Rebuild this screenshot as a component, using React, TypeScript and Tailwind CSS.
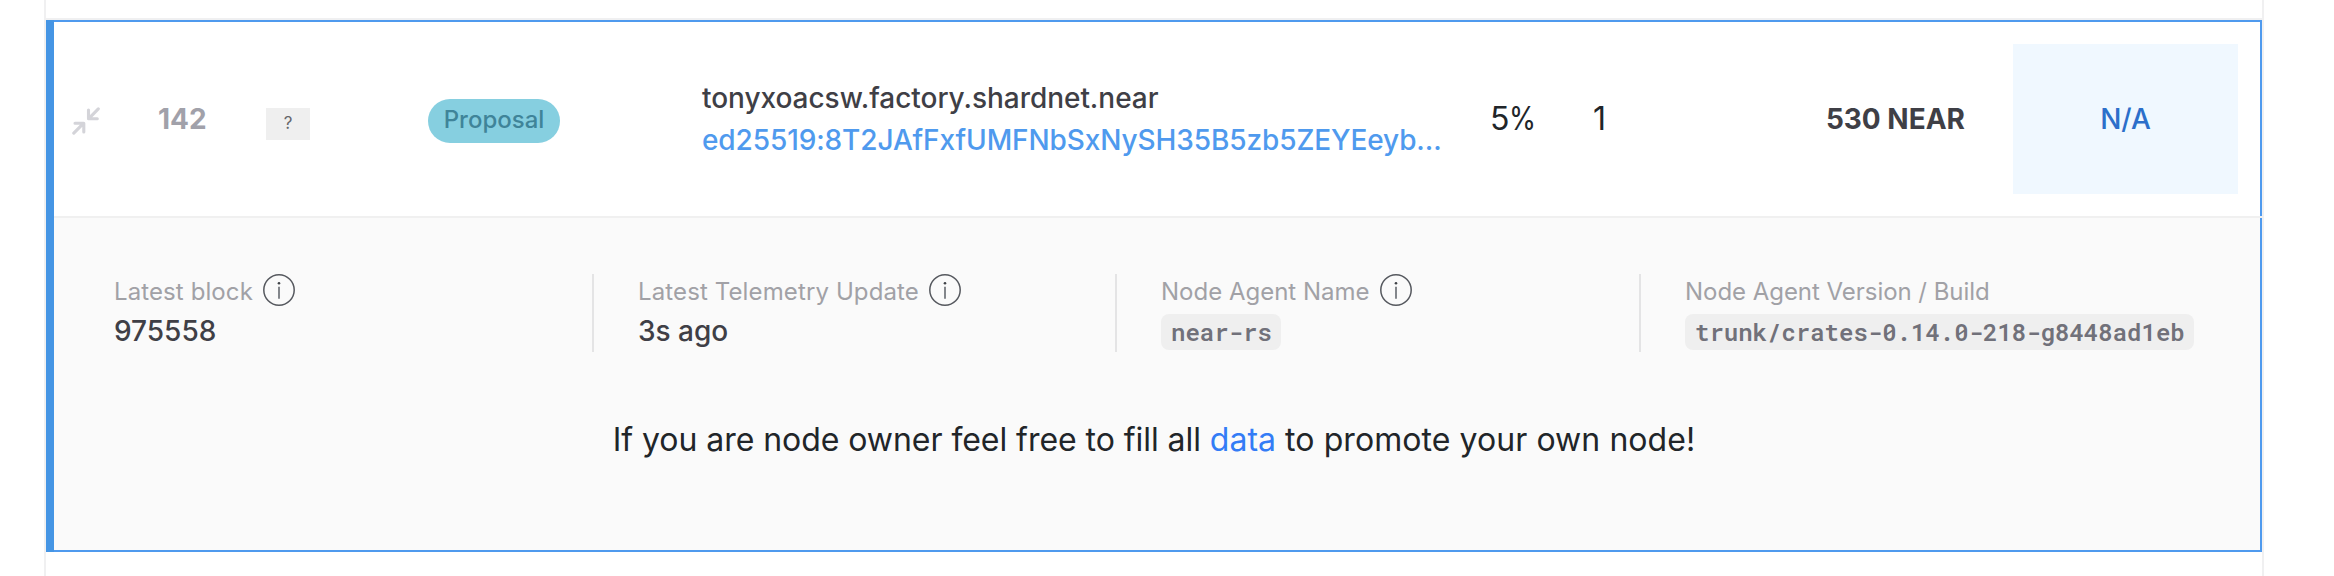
import type { ReactNode } from 'react';

function CollapseIcon() {
  return (
    <svg width="28" height="28" viewBox="0 0 28 28" fill="none" stroke="#d4d4d9" strokeWidth="3.1" strokeLinecap="round" strokeLinejoin="round">
      <path d="M26.3 1.8 17 11.3M16.5 3v8.8h8.8M1.8 26.2 11.2 16.7M3 16.2h8.8V25" />
    </svg>
  );
}

function InfoIcon() {
  return (
    <svg width="32" height="32" viewBox="0 0 32 32" fill="none" className="shrink-0">
      <circle cx="16" cy="16" r="15.2" stroke="#55585e" strokeWidth="1.5" />
      <circle cx="16" cy="9.2" r="1.3" fill="#3f4247" />
      <path d="M16 12.8v12" stroke="#83868b" strokeWidth="2" />
    </svg>
  );
}

function Detail({ label, info, last, tracking, children }: { label: string; info?: boolean; last?: boolean; tracking?: string; children: ReactNode }) {
  return (
    <div className={last ? 'h-[78px] pl-11' : 'h-[78px] border-r-2 border-[#e4e4e5] pl-11'}>
      <div className="flex h-8 items-center gap-2.5">
        <span className={`pt-1 text-[24px] leading-8 text-[#a1a1a6] ${tracking ?? ''}`}>{label}</span>
        {info && <InfoIcon />}
      </div>
      {children}
    </div>
  );
}

function Value({ children }: { children: ReactNode }) {
  return <div className="pt-1 text-[28px] leading-[42px] font-medium text-[#3f3f46]">{children}</div>;
}

function Code({ children }: { children: ReactNode }) {
  return (
    <code className="mt-2 flex h-9 w-fit items-center rounded-lg bg-[#efefef] pr-[9px] pl-2.5 font-['Roboto_Mono','Liberation_Mono',monospace] text-[24px] font-semibold text-[#71717a]">
      {children}
    </code>
  );
}

export default function App() {
  return (
    <div className="flex h-[576px] w-[2334px] flex-col overflow-hidden bg-white pr-[70px] pl-11 font-['Inter','Liberation_Sans',sans-serif] text-[#212529]">
      <div className="flex h-[576px] w-[2220px] flex-col border-x-2 border-[#f0f0f1]">
        <div className="h-5 shrink-0 border-b-2 border-[#f0f0f1]" />
        <div className="flex h-[532px] shrink-0 border-y-2 border-t-[#4f9aee] border-b-[#4f9aee]">
          <div className="-my-0.5 w-2 shrink-0 bg-[#4595e4]" />
          <div className="flex flex-1 flex-col">
            <div className="grid h-[194px] grid-cols-[104px_108px_162px_274px_788px_103px_99px_1fr_225px] items-center border-r-2 border-[#4f9aee] pr-[22px]">
              <div className="pt-1 pl-[18px]">
                <CollapseIcon />
              </div>
              <div className="text-[28px] leading-[42px] font-bold text-[#a1a1aa]">142</div>
              <div>
                <div className="mt-2.5 flex h-8 w-11 items-center justify-center bg-[#efefef] text-[17px] text-[#66666a]">?</div>
              </div>
              <div>
                <span className="mt-1 flex h-11 w-[132px] justify-center rounded-[22px] bg-[#86cfe0] text-[24px] leading-[42px] font-medium text-[#3f8499]">
                  Proposal
                </span>
              </div>
              <div className="text-[28px] leading-[42px] font-medium">
                <div className="tracking-[-0.04px] text-[#3f3f46]">tonyxoacsw.factory.shardnet.near</div>
                <div className="tracking-[-0.1px] text-[#4f9aee]">ed25519:8T2JAfFxfUMFNbSxNySH35B5zb5ZEYEeyb…</div>
              </div>
              <div className="text-[32px] leading-[48px]">
                5<span className="inline-block origin-left scale-x-[0.86]">%</span>
              </div>
              <div className="text-[32px] leading-[48px]">1</div>
              <div className="pr-12 text-right text-[28px] leading-[42px] font-bold text-[#3f3f46]">530 NEAR</div>
              <div className="flex h-[150px] items-center justify-center bg-[#f0f8ff] text-[28px] font-medium text-[#2c6fca]">N/A</div>
            </div>
            <div className="h-0.5 bg-[#f0f0f0]" />
            <div className="flex-1 border-r-2 border-[#4f9aee] bg-[#fafafa] pt-14 pl-4">
              <div className="grid grid-cols-[524px_523px_524px_1fr]">
                <Detail label="Latest block" info tracking="tracking-[0.1px]">
                  <Value>975558</Value>
                </Detail>
                <Detail label="Latest Telemetry Update" info tracking="tracking-[0.12px]">
                  <Value>3s ago</Value>
                </Detail>
                <Detail label="Node Agent Name" info>
                  <Code>near-rs</Code>
                </Detail>
                <Detail label="Node Agent Version / Build" last tracking="tracking-[-0.04px]">
                  <Code>trunk/crates-0.14.0-218-g8448ad1eb</Code>
                </Detail>
              </div>
              <p className="mt-16 pr-[22px] text-center text-[32px] leading-[48px]">
                <span className="tracking-[-0.05px]">If you are node owner feel free to fill all </span>
                <a className="text-[#337cf6]">data</a>
                <span className="tracking-[0.07px]"> to promote your own node!</span>
              </p>
            </div>
          </div>
        </div>
      </div>
    </div>
  );
}
